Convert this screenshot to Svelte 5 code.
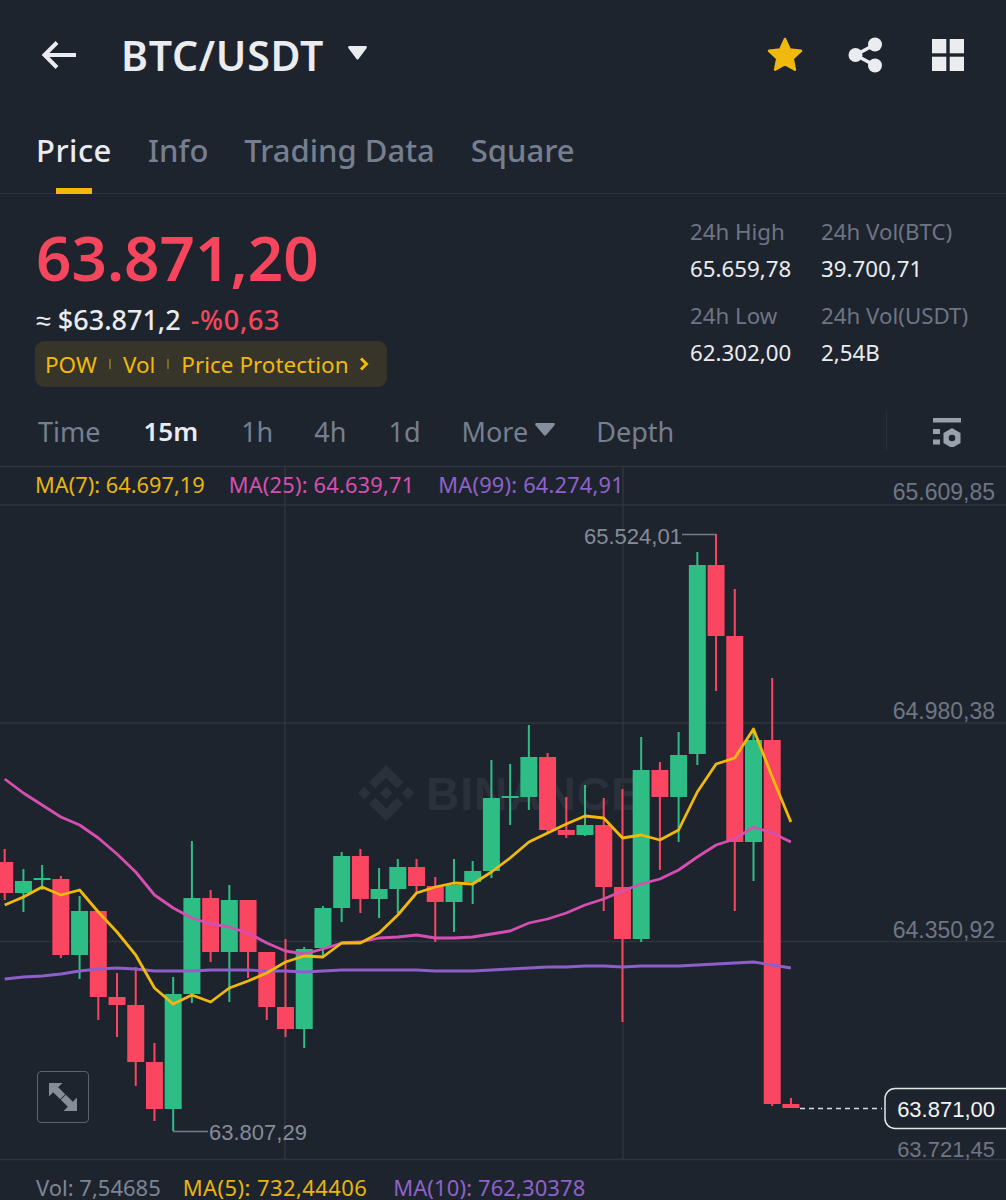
<script>
	const tabs = ['Price', 'Info', 'Trading Data', 'Square'];

	const stats = [
		{ label: '24h High', value: '65.659,78' },
		{ label: '24h Vol(BTC)', value: '39.700,71' },
		{ label: '24h Low', value: '62.302,00' },
		{ label: '24h Vol(USDT)', value: '2,54B' }
	];

	const xAt = (i) => 4.7 + i * 18.72;

	// [body top, body bottom, wick top, wick bottom, green?]
	const candles = [
		[862, 893, 849, 900, 0],
		[881, 893, 869, 912, 1],
		[878, 880, 865, 890, 1],
		[879, 955, 876, 958, 0],
		[911, 955, 896, 979, 1],
		[911, 997, 911, 1020, 0],
		[997, 1005, 973, 1037, 0],
		[1005, 1062, 967, 1086, 0],
		[1062, 1109, 1043, 1121, 0],
		[994, 1109, 977, 1131, 1],
		[898, 994, 841, 1003, 1],
		[898, 952, 890, 962, 0],
		[900, 952, 885, 1002, 1],
		[900, 952, 900, 978, 0],
		[952, 1007, 952, 1020, 0],
		[1007, 1029, 939, 1037, 0],
		[949, 1029, 947, 1048, 1],
		[908, 948, 906, 958, 1],
		[856, 908, 852, 922, 1],
		[856, 899, 849, 913, 0],
		[889, 899, 868, 918, 1],
		[867, 889, 859, 913, 1],
		[867, 886, 859, 892, 0],
		[886, 902, 877, 942, 0],
		[885, 902, 859, 932, 1],
		[871, 882, 861, 904, 1],
		[798, 871, 760, 878, 1],
		[796, 798, 764, 825, 1],
		[757, 797, 725, 810, 1],
		[757, 830, 753, 833, 0],
		[830, 835, 797, 838, 0],
		[825, 835, 785, 836, 1],
		[825, 887, 798, 911, 0],
		[887, 939, 789, 1022, 0],
		[770, 939, 737, 942, 1],
		[770, 797, 762, 870, 0],
		[755, 797, 732, 842, 1],
		[565, 754, 552, 765, 1],
		[565, 636, 534, 691, 0],
		[636, 842, 589, 911, 0],
		[740, 842, 732, 881, 1],
		[740, 1104, 678, 1106, 0],
		[1104, 1108, 1098, 1108, 0]
	];

	const ma7 = [905, 897, 887, 895, 890, 912, 932, 955, 988, 1004, 995, 1002, 988, 981, 973, 962, 956, 957, 943, 943, 933, 915, 893, 887, 883, 884, 872, 858, 842, 833, 824, 816, 818, 838, 835, 840, 830, 792, 764, 758, 729, 777, 822];
	const ma25 = [779, 793, 805, 817, 825, 838, 854, 872, 895, 908, 918, 924, 927, 933, 943, 951, 954, 949, 943, 942, 938, 937, 935, 938, 938, 937, 934, 931, 923, 919, 913, 905, 899, 891, 884, 879, 870, 857, 845, 839, 827, 833, 842];
	const ma99 = [979, 977, 976, 974, 971, 969, 968, 969, 971, 971, 971, 970, 970, 970, 971, 971, 972, 971, 970, 970, 970, 970, 970, 971, 971, 971, 970, 969, 968, 967, 967, 966, 966, 967, 966, 966, 966, 965, 964, 963, 962, 965, 968];

	const toPoints = (list) => list.map((y, i) => `${xAt(i).toFixed(1)},${y}`).join(' ');

	const axis = [
		{ y: 500, text: '65.609,85' },
		{ y: 719, text: '64.980,38' },
		{ y: 938, text: '64.350,92' },
		{ y: 1157, text: '63.721,45', small: true }
	];
</script>

<div class="page">
	<header class="top">
		<svg class="back" width="36" height="30" viewBox="0 0 36 30" fill="none">
			<path d="M35 15H4M16 2.500 3.500 15 16 27.500" stroke="#eaecef" stroke-width="4" />
		</svg>
		<span class="pair">BTC/USDT</span>
		<svg class="caret" width="19" height="14" viewBox="0 0 19 14">
			<path d="M1.500 0h16c1.200 0 1.800 1.300 1 2.200l-8 10.800c-.5.700-1.500.700-2 0L.5 2.200C-.3 1.300.3 0 1.500 0z" fill="#eaecef" />
		</svg>
		<div class="actions">
			<svg width="36" height="36" viewBox="0 0 36 36">
				<path d="M18 2l4.800 10.400 11.200 1.400-8.300 7.700 2.200 11.200L18 27.200 8.100 32.700l2.200-11.200L2 13.800l11.200-1.400z" fill="#f0b90b" stroke="#f0b90b" stroke-width="2.500" stroke-linejoin="round" />
			</svg>
			<svg width="35" height="36" viewBox="0 0 35 36" fill="#eaecef">
				<circle cx="27" cy="7.500" r="7" />
				<circle cx="7.500" cy="18" r="7" />
				<circle cx="27" cy="28.500" r="7" />
				<path d="M27 7.500 7.500 18 27 28.500" fill="none" stroke="#eaecef" stroke-width="3.500" />
			</svg>
			<svg class="grid-icon" width="32" height="32" viewBox="0 0 32 32" fill="#eaecef">
				<rect width="14.300" height="14.300" />
				<rect x="17.700" width="14.300" height="14.300" />
				<rect y="17.700" width="14.300" height="14.300" />
				<rect x="17.700" y="17.700" width="14.300" height="14.300" />
			</svg>
		</div>
	</header>

	<nav class="tabs">
		{#each tabs as tab, i}
			<span class="tab" class:active={i === 0}>{tab}</span>
		{/each}
	</nav>

	<section class="summary">
		<div class="left">
			<div class="big">63.871,20</div>
			<div class="sub"><span class="usd">≈ $63.871,2</span><span class="pct">-%0,63</span></div>
			<div class="chip">
				<span>POW</span>
				<i class="sep"></i>
				<span>Vol</span>
				<i class="sep"></i>
				<span>Price Protection</span>
				<svg width="10" height="14" viewBox="0 0 10 14" fill="none">
					<path d="M2 1.500 7.500 7 2 12.500" stroke="#f0b90b" stroke-width="3" />
				</svg>
			</div>
		</div>
		<div class="stats">
			{#each stats as s}
				<div class="stat">
					<span class="label">{s.label}</span>
					<span class="value">{s.value}</span>
				</div>
			{/each}
		</div>
	</section>

	<div class="frames">
		<span class="time">Time</span>
		<span class="m15">15m</span>
		<span class="h1">1h</span>
		<span class="h4">4h</span>
		<span class="d1">1d</span>
		<span class="more">More</span>
		<svg class="more-caret" width="20" height="13" viewBox="0 0 20 13">
			<path d="M1.500 0h17c1.200 0 1.800 1.300 1 2.200l-8.500 10c-.5.600-1.500.600-2 0l-8.500-10C-.3 1.300.3 0 1.500 0z" fill="#848e9c" />
		</svg>
		<span class="depth">Depth</span>
		<div class="frames-end">
			<svg width="30" height="30" viewBox="0 0 30 30" fill="#9aa1ae">
				<rect x="1" y="1" width="28" height="4.500" />
				<rect x="1" y="12" width="7" height="5" />
				<rect x="1" y="22.500" width="7" height="5" />
				<path fill-rule="evenodd" d="M20 11l8.500 5v10L20 31l-8.500-5V16zM20 17.700a3.300 3.300 0 1 0 0 6.600 3.300 3.300 0 0 0 0-6.600z" />
			</svg>
		</div>
	</div>

	<div class="chart">
		<svg class="plot" width="1006" height="694" viewBox="0 466 1006 694">
			<g stroke="#2e343e" stroke-width="1.500">
				<line x1="0" x2="1006" y1="466.500" y2="466.500" />
				<line x1="0" x2="1006" y1="505" y2="505" />
				<line x1="0" x2="1006" y1="723" y2="723" />
				<line x1="0" x2="1006" y1="941.500" y2="941.500" />
				<line x1="0" x2="1006" y1="1159.500" y2="1159.500" />
				<line x1="285" x2="285" y1="466" y2="1160" />
				<line x1="623" x2="623" y1="466" y2="1160" />
			</g>

			<g fill="#2b313b">
				<g transform="translate(358 765) scale(0.444)">
					<path d="M38.730 53.200l24.590-24.580 24.600 24.600 14.300-14.310L63.320 0 24.430 38.900l14.300 14.300z" />
					<path d="M0 63.310l14.300-14.310 14.310 14.310-14.310 14.300z" />
					<path d="M38.730 73.410l24.590 24.590 24.600-24.600 14.310 14.290-38.900 38.910-38.910-38.880v-.03l14.310-14.290z" />
					<path d="M98.280 63.310l14.300-14.300 14.320 14.300-14.310 14.300z" />
					<path d="M77.830 63.300L63.320 48.780 52.590 59.510l-1.240 1.230-2.540 2.540 14.510 14.500 14.510-14.470z" />
				</g>
				<text class="mark" x="426" y="810">BINANCE</text>
			</g>

			<path class="leader" d="M682 534.500h34M173 1131.500h35" />
			<path class="dash" d="M800 1108.500h82" />

			{#each candles as c, i}
				<g class={c[4] ? 'up' : 'down'}>
					<rect x={xAt(i) - 1} y={c[2]} width="2" height={c[3] - c[2]} />
					<rect x={xAt(i) - 8.500} y={c[0]} width="17" height={c[1] - c[0]} />
				</g>
			{/each}

			<polyline class="ma" stroke="#8d5fc9" points={toPoints(ma99)} />
			<polyline class="ma" stroke="#d64fb0" points={toPoints(ma25)} />
			<polyline class="ma" stroke="#f0b90b" points={toPoints(ma7)} />

			<text class="ax-label" x="584" y="544">65.524,01</text>
			<text class="ax-label" x="209" y="1140">63.807,29</text>

			{#each axis as a}
				<text class="ax" class:small={a.small} x="995" y={a.y}>{a.text}</text>
			{/each}

			<rect class="last-box" x="885" y="1088.500" width="135" height="40" rx="10" />
			<text class="last" x="995" y="1117">63.871,00</text>
		</svg>

		<div class="legend">
			<span class="c-yellow">MA(7): 64.697,19</span>
			<span class="c-pink">MA(25): 64.639,71</span>
			<span class="c-purple">MA(99): 64.274,91</span>
		</div>

		<div class="expand">
			<svg width="32" height="32" viewBox="0 0 32 32" fill="#858c9a">
				<path d="M2 2h13.500l-4.300 4.300 7 7-5 5-7-7L2 15.500z" />
				<path d="M30 30H16.500l4.300-4.300-7-7 5-5 7 7 4.200-4.200z" />
			</svg>
		</div>
	</div>

	<div class="vol">
		<span class="vol-base">Vol: 7,54685</span>
		<span class="c-yellow">MA(5): 732,44406</span>
		<span class="c-purple">MA(10): 762,30378</span>
	</div>
</div>

<style>
	:global(body) {
		background: #1e242e;
	}

	.page {
		width: 1006px;
		height: 1200px;
		overflow: hidden;
		background: #1e242e;
		font-family: 'Noto Sans', sans-serif;
		color: #eaecef;
	}

	.top {
		display: flex;
		align-items: center;
		height: 110px;
		padding-left: 41px;
		padding-right: 42px;
		box-sizing: border-box;
	}

	.pair {
		margin-left: 44px;
		font-size: 41px;
		font-weight: 600;
		letter-spacing: 0.7px;
	}

	.caret {
		margin-left: 24px;
		margin-top: -5px;
	}

	.actions {
		margin-left: auto;
		display: flex;
		align-items: center;
		gap: 45px;
	}

	.grid-icon {
		margin-left: 4px;
	}

	.tabs {
		position: relative;
		display: flex;
		align-items: center;
		gap: 36px;
		height: 84px;
		padding: 0 0 4px 36px;
		box-sizing: border-box;
		border-bottom: 1.500px solid #2b313b;
		font-size: 31px;
		font-weight: 500;
		color: #767f8f;
	}

	.tab {
		position: relative;
	}

	.tab.active {
		color: #eaecef;
		letter-spacing: 0.5px;
	}

	.tab.active::after {
		content: '';
		position: absolute;
		left: 50%;
		transform: translateX(-50%);
		bottom: -23px;
		width: 36px;
		height: 6px;
		background: #f0b90b;
	}

	.summary {
		display: flex;
		justify-content: space-between;
		height: 206px;
	}

	.left {
		padding: 25px 0 0 36px;
	}

	.big {
		font-size: 62px;
		line-height: 76px;
		font-weight: 600;
		color: #f6465d;
	}

	.sub {
		margin-top: 8px;
		font-size: 27px;
		line-height: 34px;
		font-weight: 500;
		display: flex;
	}

	.pct {
		margin-left: 10px;
		letter-spacing: 0.7px;
		color: #f6465d;
	}

	.chip {
		display: flex;
		align-items: center;
		width: 352px;
		height: 46px;
		margin-top: 4px;
		margin-left: -1px;
		padding-left: 10px;
		box-sizing: border-box;
		background: #37342a;
		border-radius: 9px;
		font-size: 22.500px;
		color: #f0b90b;
	}

	.sep {
		width: 2px;
		height: 10px;
		margin: 0 12px;
		background: #7a6a2a;
	}

	.chip svg {
		margin-left: 10px;
	}

	.stats {
		width: 316px;
		display: grid;
		grid-template-columns: 131px 1fr;
		row-gap: 15px;
		align-content: start;
		padding-top: 22px;
		box-sizing: border-box;
		font-size: 22.300px;
	}

	.stat {
		display: flex;
		flex-direction: column;
		gap: 5px;
		line-height: 32px;
	}

	.label {
		color: #6d7584;
	}

	.frames {
		position: relative;
		display: flex;
		align-items: center;
		height: 66px;
		padding-bottom: 4px;
		box-sizing: border-box;
		font-size: 27px;
		color: #767f8f;
	}

	.time {
		margin-left: 38px;
	}

	.m15 {
		margin-left: 43px;
		font-size: 26px;
		font-weight: 600;
		color: #eaecef;
	}

	.h1 {
		margin-left: 43px;
	}

	.h4 {
		margin-left: 41px;
	}

	.d1 {
		margin-left: 42px;
	}

	.more {
		margin-left: 41px;
	}

	.more-caret {
		margin-left: 7px;
		margin-top: -4px;
	}

	.depth {
		margin-left: 41px;
	}

	.frames-end {
		position: absolute;
		left: 886px;
		top: 12px;
		width: 120px;
		height: 38px;
		border-left: 1.500px solid #2b313b;
		display: flex;
		padding-left: 45px;
		padding-top: 5px;
		box-sizing: border-box;
	}

	.chart {
		position: relative;
		height: 694px;
	}

	.plot {
		display: block;
		overflow: visible;
	}

	.mark {
		font-family: 'Liberation Sans', sans-serif;
		font-size: 46px;
		font-weight: 700;
		letter-spacing: 1px;
	}

	.up rect {
		fill: #2ebd85;
	}

	.down rect {
		fill: #fb4661;
	}

	.ma {
		fill: none;
		stroke-width: 2.800;
		stroke-linejoin: round;
	}

	.leader {
		fill: none;
		stroke: #767d8a;
		stroke-width: 1.500;
	}

	.dash {
		fill: none;
		stroke: #d8dade;
		stroke-width: 1.500;
		stroke-dasharray: 5 4;
	}

	.ax,
	.ax-label,
	.last {
		font-family: 'Liberation Sans', sans-serif;
		font-size: 23px;
	}

	.ax {
		text-anchor: end;
		fill: #6f7683;
	}

	.ax.small {
		font-size: 22px;
	}

	.ax-label {
		font-size: 22px;
		fill: #858c99;
	}

	.last {
		font-size: 22px;
		text-anchor: end;
		fill: #f5f5f5;
	}

	.last-box {
		fill: #1e242e;
		stroke: #e4e6e8;
		stroke-width: 1.500;
	}

	.legend {
		position: absolute;
		left: 35px;
		top: 5px;
		display: flex;
		gap: 24px;
		font-size: 21.800px;
		line-height: 28px;
		white-space: nowrap;
	}

	.legend .c-pink,
	.legend .c-purple {
		letter-spacing: 0.2px;
	}

	.expand {
		position: absolute;
		left: 37px;
		top: 605px;
		width: 52px;
		height: 52px;
		box-sizing: border-box;
		border: 1.500px solid #5b6270;
		border-radius: 4px;
		display: flex;
		align-items: center;
		justify-content: center;
	}

	.vol {
		display: flex;
		gap: 22px;
		padding: 14px 0 0 36px;
		font-size: 22px;
		line-height: 26px;
		white-space: nowrap;
	}

	.vol .c-yellow {
		letter-spacing: 0.4px;
	}

	.vol .c-purple {
		margin-left: 4px;
		letter-spacing: 0.1px;
	}

	.vol-base {
		color: #7d8594;
	}

	.c-yellow {
		color: #e8b40e;
	}

	.c-pink {
		color: #d64fb0;
	}

	.c-purple {
		color: #9061c9;
	}
</style>
